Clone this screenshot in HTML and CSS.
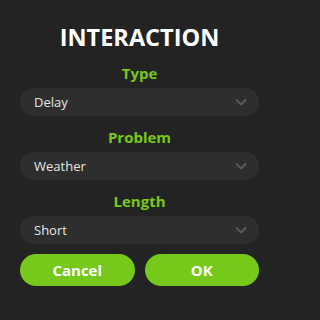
FILE: index.html
```html
<!DOCTYPE html>
<html>
<head>
<meta charset="utf-8">
<link rel="stylesheet" href="styles.css">
</head>
<body>
<div class="dialog">
  <h1 class="title">INTERACTION</h1>
  <div class="label">Type</div>
  <div class="select"><span>Delay</span><svg class="chev" width="12" height="8" viewBox="0 0 12 8"><path d="M1 1.5 L6 6.5 L11 1.5" fill="none" stroke="#5c5c5c" stroke-width="1.8"/></svg></div>
  <div class="label">Problem</div>
  <div class="select"><span>Weather</span><svg class="chev" width="12" height="8" viewBox="0 0 12 8"><path d="M1 1.5 L6 6.5 L11 1.5" fill="none" stroke="#5c5c5c" stroke-width="1.8"/></svg></div>
  <div class="label">Length</div>
  <div class="select"><span>Short</span><svg class="chev" width="12" height="8" viewBox="0 0 12 8"><path d="M1 1.5 L6 6.5 L11 1.5" fill="none" stroke="#5c5c5c" stroke-width="1.8"/></svg></div>
  <div class="buttons">
    <button class="btn">Cancel</button>
    <button class="btn">OK</button>
  </div>
</div>
</body>
</html>
```
FILE: styles.css
```css
html, body {
  margin: 0;
  padding: 0;
  background: #232323;
  height: 100%;
}
.dialog {
  box-sizing: border-box;
  width: 279px;
  display: flex;
  flex-direction: column;
  padding: 25px 20px 0;
  font-family: "Open Sans", "Noto Sans", sans-serif;
}
.title {
  margin: 0;
  font-size: 23.5px;
  line-height: 24px;
  font-weight: 700;
  color: #ffffff;
  text-align: center;
}
.label {
  margin: 11px 0 5px;
  font-size: 15px;
  line-height: 20px;
  font-weight: 700;
  color: #76c81a;
  text-align: center;
}
.title + .label {
  margin-top: 14px;
}
.select {
  height: 28px;
  border-radius: 14px;
  background: #2e2e2e;
  display: flex;
  align-items: center;
  justify-content: space-between;
  padding: 0 12px 0 14px;
  color: #e6e6e6;
  font-size: 13px;
}
.chev {
  display: block;
}
.buttons {
  display: flex;
  gap: 10px;
  margin-top: 10px;
}
.btn {
  flex: 1;
  height: 32px;
  border: none;
  border-radius: 16px;
  background: #76c81a;
  color: #ffffff;
  font-family: "Open Sans", "Noto Sans", sans-serif;
  font-size: 15px;
  font-weight: 700;
  padding: 0;
}
```
